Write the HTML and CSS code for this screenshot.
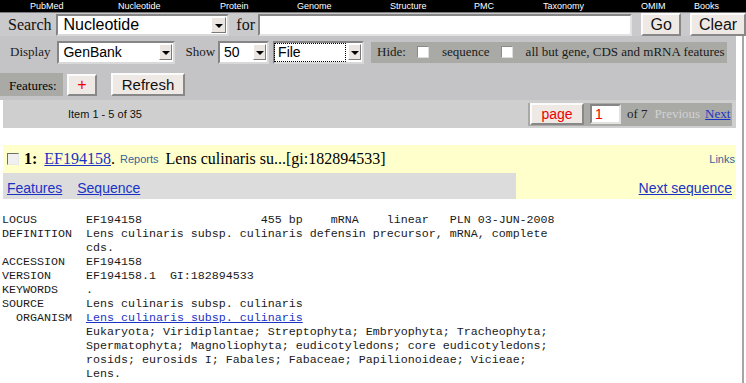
FILE: index.html
```html
<!DOCTYPE html>
<html>
<head>
  <title>Nucleotide - EF194158</title>
  <link rel="stylesheet" href="styles.css">
</head>
<body>
  <!-- database tabs -->
  <div class="topnav">
    <a>PubMed</a>
    <a>Nucleotide</a>
    <a>Protein</a>
    <a>Genome</a>
    <a>Structure</a>
    <a>PMC</a>
    <a>Taxonomy</a>
    <a>OMIM</a>
    <a>Books</a>
  </div>

  <div class="searchbar">
    <span class="search-label">Search</span>
    <span class="select sel-db"><span class="sel-text">Nucleotide</span><span class="sel-arrow"></span></span>
    <span class="search-label for-label">for</span>
    <span class="textbox term"></span>
    <span class="button go">Go</span>
    <span class="button clear">Clear</span>
  </div>

  <div class="page">
    <div class="form">
      <div class="form-row">
        <span class="label">Display</span>
        <span class="select sel-display"><span class="sel-text">GenBank</span><span class="sel-arrow"></span></span>
        <span class="label show-label">Show</span>
        <span class="select sel-show"><span class="sel-text">50</span><span class="sel-arrow"></span></span>
        <span class="select sel-file"><span class="sel-text focus">File</span><span class="sel-arrow"></span></span>
        <div class="hide-box">
          <span class="label">Hide:</span>
          <span class="check"></span>
          <span class="label">sequence</span>
          <span class="check"></span>
          <span class="label">all but gene, CDS and mRNA features</span>
        </div>
      </div>
      <div class="form-row features-row">
        <span class="features-label">Features:</span>
        <span class="button plus">+</span>
        <span class="button refresh">Refresh</span>
      </div>
    </div>

    <div class="itembar">
      <span class="item-count">Item 1 - 5 of 35</span>
      <div class="pager">
        <span class="button page-btn">page</span>
        <span class="textbox page-num">1</span>
        <span class="of-pages">of 7</span>
        <span class="prev">Previous</span>
        <a class="next">Next</a>
      </div>
    </div>

    <div class="entry-head">
      <span class="entry-check"></span>
      <b class="entry-num">1:</b>
      <a class="entry-acc">EF194158</a><span class="entry-dot">.</span>
      <a class="small-link reports">Reports</a>
      <span class="entry-title">Lens culinaris su...[gi:182894533]</span>
      <a class="small-link links">Links</a>
    </div>
    <div class="entry-nav">
      <div class="entry-tabs">
        <a>Features</a>
        <a>Sequence</a>
      </div>
      <a class="next-seq">Next sequence</a>
    </div>

<pre class="record">LOCUS       EF194158                 455 bp    mRNA    linear   PLN 03-JUN-2008
DEFINITION  Lens culinaris subsp. culinaris defensin precursor, mRNA, complete
            cds.
ACCESSION   EF194158
VERSION     EF194158.1  GI:182894533
KEYWORDS    .
SOURCE      Lens culinaris subsp. culinaris
  ORGANISM  <a>Lens culinaris subsp. culinaris</a>
            Eukaryota; Viridiplantae; Streptophyta; Embryophyta; Tracheophyta;
            Spermatophyta; Magnoliophyta; eudicotyledons; core eudicotyledons;
            rosids; eurosids I; Fabales; Fabaceae; Papilionoideae; Vicieae;
            Lens.</pre>
  </div>
</body>
</html>
```

FILE: styles.css
```css
body {
  margin: 0;
  font-family: "Liberation Serif", serif;
  color: #000;
  background-color: #fff;
  overflow: hidden;
}

a {
  color: #1a33c4;
  text-decoration: underline;
}

/* tabs */
.topnav {
  display: grid;
  grid-template-columns: 88px 102px 77px 93px 84px 69px 98px 53px auto;
  height: 12px;
  padding-left: 30px;
  background-color: #000;
  border-bottom: 1px solid #7c7c7c;
  font: 9px/12px "Liberation Sans", sans-serif;
}

.topnav a {
  color: #fff;
  text-decoration: none;
  white-space: nowrap;
}

/* search line */
.searchbar {
  display: flex;
  align-items: center;
  height: 23px;
  padding-left: 8px;
  background-color: #cac9cc;
  white-space: nowrap;
}

.search-label {
  font-size: 16px;
  color: #111;
}

.for-label {
  margin-left: 7px;
}

.select {
  display: flex;
  align-items: center;
  box-sizing: border-box;
  background-color: #fff;
  border: 2px solid;
  border-color: #858585 #d9d9d9 #d9d9d9 #858585;
  font-family: "Liberation Sans", sans-serif;
  font-size: 14px;
}

.sel-text {
  flex: 1;
  padding-left: 4px;
  line-height: 17px;
}

.sel-arrow {
  position: relative;
  width: 11px;
  height: 14px;
  margin-right: 1px;
  background-color: #ebe6e2;
  border: 1px solid;
  border-color: #fff #7a7a7a #7a7a7a #fff;
}

.sel-arrow::after {
  content: "";
  position: absolute;
  left: 2px;
  top: 6px;
  border-left: 4px solid transparent;
  border-right: 4px solid transparent;
  border-top: 4px solid #000;
  margin-left: -0.5px;
}

.sel-db {
  width: 175px;
  height: 22px;
  margin-left: 4px;
  font-size: 16px;
}

.sel-db .sel-text {
  padding-left: 6px;
}

.sel-db .sel-arrow {
  width: 13px;
  height: 14px;
  margin-right: 1px;
}

.sel-db .sel-arrow::after {
  left: 3px;
}

.textbox {
  box-sizing: border-box;
  background-color: #fff;
  border: 2px solid;
  border-color: #858585 #e2e2e2 #e2e2e2 #858585;
}

.term {
  width: 377px;
  height: 22px;
  margin-left: 3px;
}

.button {
  display: flex;
  align-items: center;
  justify-content: center;
  box-sizing: border-box;
  background-color: #efe9e5;
  border: 2px solid;
  border-color: #fbfbfb #888 #888 #fbfbfb;
  font-family: "Liberation Sans", sans-serif;
  font-size: 16px;
  color: #111;
}

.go {
  width: 40px;
  height: 23px;
  margin-left: 9px;
}

.clear {
  width: 56px;
  height: 23px;
  margin-left: 9px;
  flex-shrink: 0;
}

/* display options */
.page {
  width: 742px;
  min-height: 347px;
  border-right: 2px solid #a6a6a6;
}

.form {
  width: 736px;
  padding: 4px 0 4px 0;
  background-color: #c4c3c6;
}

.form-row {
  display: flex;
  align-items: center;
  height: 24px;
  padding-left: 10px;
  white-space: nowrap;
}

.label {
  font-size: 13px;
  color: #1a1a1a;
}

.sel-display {
  width: 118px;
  height: 23px;
  margin-left: 7px;
}

.show-label {
  margin-left: 10px;
}

.sel-show {
  width: 51px;
  height: 23px;
  margin-left: 3px;
}

.sel-file {
  width: 91px;
  height: 23px;
  margin-left: 4px;
}

.sel-file .sel-text {
  margin-right: 3px;
  padding-left: 3px;
  outline: 1px dotted #000;
}

.hide-box {
  display: flex;
  align-items: center;
  width: 350px;
  height: 21px;
  margin-left: 7px;
  padding-left: 6px;
  background-color: #a9aaa6;
}

.check {
  box-sizing: border-box;
  width: 12px;
  height: 12px;
  margin: 0 13px 0 11px;
  background-color: #fff;
  border: 1px solid;
  border-color: #8a8a8a #ddd #ddd #8a8a8a;
}

.features-row {
  height: 23px;
  margin-top: 9px;
  padding-left: 0;
}

.features-label {
  box-sizing: border-box;
  width: 63px;
  height: 23px;
  padding: 5px 0 0 9px;
  background-color: #a9aaa6;
  font-size: 13px;
}

.plus {
  width: 30px;
  height: 22px;
  margin-left: 4px;
  color: #e00;
}

.refresh {
  width: 74px;
  height: 23px;
  margin-left: 14px;
  font-size: 15px;
}

/* paging */
.itembar {
  display: flex;
  align-items: center;
  width: 733px;
  height: 28px;
  margin-left: 3px;
  background-color: #cfcfcf;
}

.item-count {
  padding-left: 65px;
  font: 11px "Liberation Sans", sans-serif;
  color: #111;
}

.pager {
  display: flex;
  align-items: center;
  width: 204px;
  height: 23px;
  margin-left: auto;
  margin-right: 4px;
  background-color: #a9aaa6;
  font-size: 13px;
  white-space: nowrap;
}

.page-btn {
  width: 54px;
  height: 22px;
  margin-left: 2px;
  font-size: 14px;
  color: #e00;
}

.page-num {
  width: 31px;
  height: 20px;
  margin-left: 6px;
  padding-left: 3px;
  font: 14px/16px "Liberation Sans", sans-serif;
  color: #e00;
}

.of-pages {
  margin-left: 6px;
  color: #222;
}

.prev {
  margin-left: 7px;
  color: #d2d2d2;
}

.next {
  margin-left: 5px;
}

/* record */
.entry-head {
  display: flex;
  align-items: center;
  width: 733px;
  height: 28px;
  margin: 17px 0 0 3px;
  background-color: #ffffcc;
  font-size: 16px;
  white-space: nowrap;
}

.entry-check {
  box-sizing: border-box;
  width: 12px;
  height: 12px;
  margin-left: 4px;
  background-color: #f0f0f0;
  border: 1px solid;
  border-color: #6e6e6e #e8e8e8 #e8e8e8 #6e6e6e;
}

.entry-num {
  margin-left: 5px;
}

.entry-acc {
  margin-left: 7px;
}

.small-link {
  font: 11px "Liberation Sans", sans-serif;
  color: #336699;
  text-decoration: none;
}

.reports {
  margin-left: 5px;
}

.entry-title {
  margin-left: 7px;
}

.links {
  margin-left: auto;
  margin-right: 1px;
}

.entry-nav {
  display: flex;
  align-items: center;
  width: 733px;
  height: 26px;
  margin-left: 3px;
  background-color: #ffffcc;
  font: 14px "Liberation Sans", sans-serif;
}

.entry-tabs {
  display: flex;
  align-items: center;
  gap: 15px;
  box-sizing: border-box;
  width: 513px;
  height: 26px;
  padding: 3px 0 0 4px;
  background-color: #dcdcdc;
}

.next-seq {
  margin: 3px 4px 0 auto;
}

.record {
  margin: 14px 0 0 2px;
  font: 11.67px/14px "Liberation Mono", monospace;
  color: #1a1a1a;
}
```
